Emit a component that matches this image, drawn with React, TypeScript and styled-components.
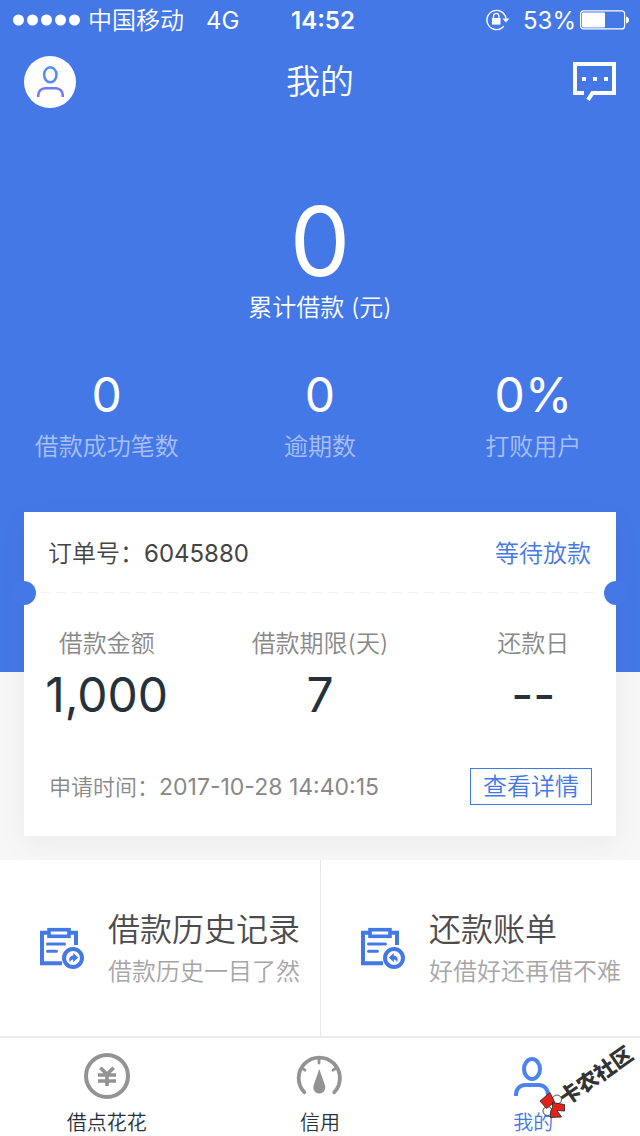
import React from 'react';
import styled, { createGlobalStyle } from 'styled-components';

const BLUE = '#4578e7';
const GREY = '#939393';

const Global = createGlobalStyle`
  *, *::before, *::after { box-sizing: border-box; }
  body {
    margin: 0;
    background: #f7f7f7;
    font-family: Inter, "Noto Sans CJK SC", sans-serif;
    font-weight: 350;
  }
  h1, p, dl, dt, dd { margin: 0; font-weight: inherit; }
  button { font: inherit; padding: 0; border: 0; background: none; cursor: pointer; }
  a { color: inherit; text-decoration: none; }
  svg { display: block; }
`;

const Page = styled.div`
  min-height: 100vh;
  display: flex;
  flex-direction: column;
`;

const Hero = styled.header`
  background: ${BLUE};
  color: #fff;
  padding-bottom: 209px;
`;

const StatusBar = styled.div`
  display: grid;
  grid-template-columns: 1fr auto 1fr;
  align-items: center;
  height: 40px;
  padding: 0 11px 0 13px;
  font-size: 24px;
  line-height: 36px;
`;

const StatusGroup = styled.div<{ $end?: boolean }>`
  display: flex;
  align-items: center;
  justify-content: ${p => (p.$end ? 'flex-end' : 'flex-start')};
  gap: ${p => (p.$end ? 4 : 8)}px;
`;

const StatusText = styled.span`
  padding-top: 2px;
`;

const Network = styled(StatusText)`
  margin-left: 14px;
  font-weight: 400;
`;

const Clock = styled.time`
  padding: 2px 0 0 4px;
  font-weight: 600;
`;

const Percent = styled(StatusText)`
  margin-left: 9px;
  font-weight: 400;
`;

const NavBar = styled.nav`
  display: grid;
  grid-template-columns: 1fr auto 1fr;
  align-items: center;
  height: 80px;
  padding: 4px 24px 0;
`;

const Title = styled.h1`
  font-size: 34px;
  line-height: 48px;
`;

const IconButton = styled.button<{ $end?: boolean }>`
  justify-self: ${p => (p.$end ? 'end' : 'start')};
`;

const Total = styled.div`
  padding-top: 73px;
  text-align: center;
`;

const TotalValue = styled.p`
  font-size: 96px;
  line-height: 96px;
  font-weight: 400;
`;

const TotalLabel = styled.p`
  font-size: 24px;
  line-height: 32px;
  margin-top: 3px;
`;

const Columns = styled.dl`
  display: grid;
  grid-template-columns: repeat(3, 1fr);
  text-align: center;
`;

const Stats = styled(Columns)`
  margin-top: 47px;
`;

const Stat = styled.div<{ $labelFirst?: boolean }>`
  display: flex;
  flex-direction: ${p => (p.$labelFirst ? 'column' : 'column-reverse')};
  gap: ${p => (p.$labelFirst ? 11 : 12)}px;
`;

const StatLabel = styled.dt<{ $color: string }>`
  font-size: 24px;
  line-height: 32px;
  color: ${p => p.$color};
`;

const StatValue = styled.dd`
  font-size: 48px;
  line-height: 48px;
  font-weight: 400;
`;

const Card = styled.section`
  position: relative;
  margin: -160px 24px 24px;
  background: #fff;
  box-shadow: 0 8px 28px rgba(0, 0, 0, 0.05);
`;

const CardHead = styled.div`
  display: flex;
  justify-content: space-between;
  align-items: center;
  height: 80px;
  padding: 3px 25px 0 24px;
  font-size: 24px;
  line-height: 32px;
  color: #444;
`;

const Status = styled.span`
  color: ${BLUE};
`;

const OrderNumber = styled.span`
  font-weight: 400;
`;

const Perforation = styled.div`
  height: 1px;
  margin: 0 16px;
  background: repeating-linear-gradient(90deg, #f2f2f2 0 10px, transparent 10px 16px);
`;

const Notch = styled.span<{ $side: 'left' | 'right' }>`
  position: absolute;
  top: 69px;
  ${p => p.$side}: -12px;
  width: 24px;
  height: 24px;
  border-radius: 50%;
  background: ${BLUE};
`;

const Terms = styled(Columns)`
  margin: 35px -24px 0;
  color: #26323b;
`;

const CardFoot = styled.div`
  display: flex;
  justify-content: space-between;
  align-items: center;
  padding: 49px 24px 31px 25px;
  font-size: 22px;
  line-height: 32px;
  color: #888;
`;

const Timestamp = styled.time`
  font-size: 23px;
  font-weight: 400;
`;

const DetailButton = styled.button`
  && {
    border: 1px solid ${BLUE};
    padding: 1px 12px 0;
    height: 37px;
    font-size: 24px;
    line-height: 34px;
    color: ${BLUE};
  }
`;

const Menu = styled.nav`
  display: grid;
  grid-template-columns: 1fr 1fr;
  flex: 1 0 176px;
  background: #fff;
`;

const MenuItem = styled.a`
  display: flex;
  align-items: center;
  gap: 24px;
  padding-left: 40px;
  white-space: nowrap;

  & + & { border-left: 1px solid #e8e8e8; }
`;

const MenuText = styled.div`
  padding-top: 4px;
`;

const MenuTitle = styled.p`
  font-size: 32px;
  line-height: 44px;
  color: #4c4c4c;
`;

const MenuNote = styled.p`
  font-size: 24px;
  line-height: 40px;
  color: #a6a6a6;
`;

const TabBar = styled.nav`
  position: relative;
  display: grid;
  grid-template-columns: repeat(3, 1fr);
  border-top: 2px solid #ececec;
  background: #fff;
`;

const Tab = styled.a<{ $active?: boolean }>`
  display: flex;
  flex-direction: column;
  align-items: center;
  gap: 10px;
  padding-top: 14px;
  font-size: 20px;
  line-height: 26px;
  color: ${p => (p.$active ? BLUE : '#26323b')};
`;

const Watermark = styled.svg`
  position: absolute;
  right: 0;
  bottom: 0;
  pointer-events: none;
`;

const SignalDots = () => (
  <svg width="67" height="12" viewBox="0 0 67 12" fill="#fff" aria-hidden="true">
    {[5.5, 19.5, 33.5, 47.5, 61.5].map(x => <circle key={x} cx={x} cy="6" r="5.5" />)}
  </svg>
);

const RotationLock = () => (
  <svg width="24" height="22" viewBox="0 0 24 22" fill="none" aria-hidden="true">
    <path d="M17.800 17.300A9.600 9.600 0 1 1 20 9.500" stroke="#fff" strokeWidth="1.400" />
    <path d="M16.400 9.500h7l-3.500 4z" fill="#fff" />
    <rect x="6" y="9" width="8.500" height="6.600" fill="#fff" />
    <path d="M7.500 9.500V7a2.700 2.700 0 0 1 5.400 0v2.500" stroke="#fff" strokeWidth="1.300" />
  </svg>
);

const Battery = () => (
  <svg width="49" height="20" viewBox="0 0 49 20" fill="none" aria-hidden="true">
    <rect x="0.600" y="0.900" width="44" height="18" rx="3" stroke="#fff" strokeWidth="1.200" />
    <rect x="2" y="2.500" width="23" height="15" rx="1" fill="#fff" />
    <path d="M46 6.500c2 .4 3 1.800 3 3.500s-1 3.100-3 3.500z" fill="#fff" />
  </svg>
);

const Avatar = () => (
  <svg width="52" height="52" viewBox="0 0 52 52" fill="none" aria-hidden="true">
    <defs>
      <linearGradient id="avatar" gradientUnits="userSpaceOnUse" x1="0" y1="10" x2="0" y2="41">
        <stop offset="0" stopColor="#4596f7" />
        <stop offset="1" stopColor="#7a72f2" />
      </linearGradient>
    </defs>
    <circle cx="26" cy="26" r="26" fill="#fff" />
    <g stroke="url(#avatar)" strokeWidth="2.500">
      <ellipse cx="26.300" cy="18.800" rx="6.200" ry="7.500" />
      <path d="M14.200 41v-1.500c0-4 2.800-7.200 6.800-7.200h11c4 0 6.800 3.200 6.800 7.200V41" />
    </g>
  </svg>
);

const MessageIcon = () => (
  <svg width="43" height="40" viewBox="0 0 43 40" fill="none" aria-hidden="true">
    <path d="M11 31H2V2h39v29H19.500l-4.500 6.800" stroke="#fff" strokeWidth="4" />
    <path d="M9 15h4v4H9zM20 15h4v4h-4zM31 15h4v4h-4z" fill="#fff" />
  </svg>
);

const ClipboardIcon = ({ back = false }: { back?: boolean }) => (
  <svg width="44" height="43" viewBox="0 0 44 43" fill="none" aria-hidden="true">
    <path d="M8 5.700H2v30.500h20M30 5.700h6V18" stroke={BLUE} strokeWidth="4" />
    <rect x="9" y="2.700" width="20" height="6.600" fill="#fff" stroke={BLUE} strokeWidth="3.600" />
    <path d="M7.500 17h17M7.500 24.300h9" stroke={BLUE} strokeWidth="3" strokeLinecap="round" />
    <circle cx="33" cy="31" r="9" fill="#fff" stroke={BLUE} strokeWidth="4" />
    <path
      d="M33.200 26l5 4.600-5 4.600v-2.600c-1.800 0-2.600.8-3.200 2.900-1.800-4 0-6.600 3.200-6.900z"
      fill={BLUE}
      transform={back ? 'translate(66 0) scale(-1 1)' : undefined}
    />
  </svg>
);

const YenIcon = () => (
  <svg width="48" height="48" viewBox="0 0 48 48" fill="none" stroke={GREY} aria-hidden="true">
    <circle cx="24" cy="24" r="21" strokeWidth="4" />
    <path d="M17.300 15.800l6.700 6.500 6.700-6.500M24 22v12M15 23h18M15 29h18" strokeWidth="3.600" />
  </svg>
);

const GaugeIcon = () => (
  <svg width="48" height="48" viewBox="0 0 48 48" fill="none" stroke={GREY} aria-hidden="true">
    <path d="M8.300 40.300A20.600 20.600 0 1 1 38.300 40.300" strokeWidth="3.800" strokeLinecap="round" />
    <path d="M23 7v4M6.500 16.500l2.500 1.700M39.500 16.500l-2.500 1.700" strokeWidth="2.800" strokeLinecap="round" />
    <path d="M23.300 17l5.400 15.500c2 4-.8 9-5.400 9s-7.400-5-5.400-9z" fill={GREY} stroke="none" />
  </svg>
);

const MeIcon = () => (
  <svg width="48" height="48" viewBox="0 0 48 48" fill="none" stroke="#4d82f0" strokeWidth="4" aria-hidden="true">
    <ellipse cx="23" cy="17" rx="8" ry="10" />
    <path d="M7 44v-1.500c0-5.500 4-9.500 9.500-9.500h13c5.500 0 9.500 4 9.500 9.500V44" />
  </svg>
);

const stats = [
  { label: '借款成功笔数', value: '0' },
  { label: '逾期数', value: '0' },
  { label: '打败用户', value: '0%' },
];

const terms = [
  { label: '借款金额', value: '1,000' },
  { label: '借款期限(天)', value: '7' },
  { label: '还款日', value: '--' },
];

export default function App() {
  return (
    <Page>
      <Global />
      <Hero>
        <StatusBar>
          <StatusGroup>
            <SignalDots />
            <StatusText>中国移动</StatusText>
            <Network>4G</Network>
          </StatusGroup>
          <Clock>14:52</Clock>
          <StatusGroup $end>
            <RotationLock />
            <Percent>53%</Percent>
            <Battery />
          </StatusGroup>
        </StatusBar>
        <NavBar>
          <IconButton aria-label="个人资料"><Avatar /></IconButton>
          <Title>我的</Title>
          <IconButton $end aria-label="消息"><MessageIcon /></IconButton>
        </NavBar>
        <Total>
          <TotalValue>0</TotalValue>
          <TotalLabel>累计借款 (元)</TotalLabel>
        </Total>
        <Stats>
          {stats.map(s => (
            <Stat key={s.label}>
              <StatLabel $color="rgba(255, 255, 255, 0.55)">{s.label}</StatLabel>
              <StatValue>{s.value}</StatValue>
            </Stat>
          ))}
        </Stats>
      </Hero>

      <Card>
        <CardHead>
          <span>订单号：<OrderNumber>6045880</OrderNumber></span>
          <Status>等待放款</Status>
        </CardHead>
        <Perforation />
        <Notch $side="left" />
        <Notch $side="right" />
        <Terms>
          {terms.map(t => (
            <Stat key={t.label} $labelFirst>
              <StatLabel $color="#888">{t.label}</StatLabel>
              <StatValue>{t.value}</StatValue>
            </Stat>
          ))}
        </Terms>
        <CardFoot>
          <span>申请时间：<Timestamp>2017-10-28 14:40:15</Timestamp></span>
          <DetailButton>查看详情</DetailButton>
        </CardFoot>
      </Card>

      <Menu>
        <MenuItem href="#history">
          <ClipboardIcon />
          <MenuText>
            <MenuTitle>借款历史记录</MenuTitle>
            <MenuNote>借款历史一目了然</MenuNote>
          </MenuText>
        </MenuItem>
        <MenuItem href="#bills">
          <ClipboardIcon back />
          <MenuText>
            <MenuTitle>还款账单</MenuTitle>
            <MenuNote>好借好还再借不难</MenuNote>
          </MenuText>
        </MenuItem>
      </Menu>

      <TabBar>
        <Tab href="#loan"><YenIcon />借点花花</Tab>
        <Tab href="#credit"><GaugeIcon />信用</Tab>
        <Tab href="#me" $active><MeIcon />我的</Tab>
        <Watermark width="110" height="98" viewBox="530 1038 110 98">
          <g stroke="#222" strokeWidth="0.800">
            <circle cx="557" cy="1099.500" r="4.500" fill="#fff" />
            <circle cx="547.500" cy="1111" r="4.500" fill="#fff" />
            <path d="M540 1101l10-8.500 4.500 9.500-8 6.500z" fill="#e2231a" />
            <path d="M552.500 1102.500l12 2v6.500l-7.500-.5 4.500 6.500-11 .5v-6l2-4z" fill="#e2231a" />
          </g>
          <text
            x="566"
            y="1106"
            transform="rotate(-35 566 1106)"
            fill="#333"
            fontFamily='"Noto Sans CJK SC", sans-serif'
            fontWeight="900"
            fontSize="21"
          >
            卡农社区
          </text>
        </Watermark>
      </TabBar>
    </Page>
  );
}
